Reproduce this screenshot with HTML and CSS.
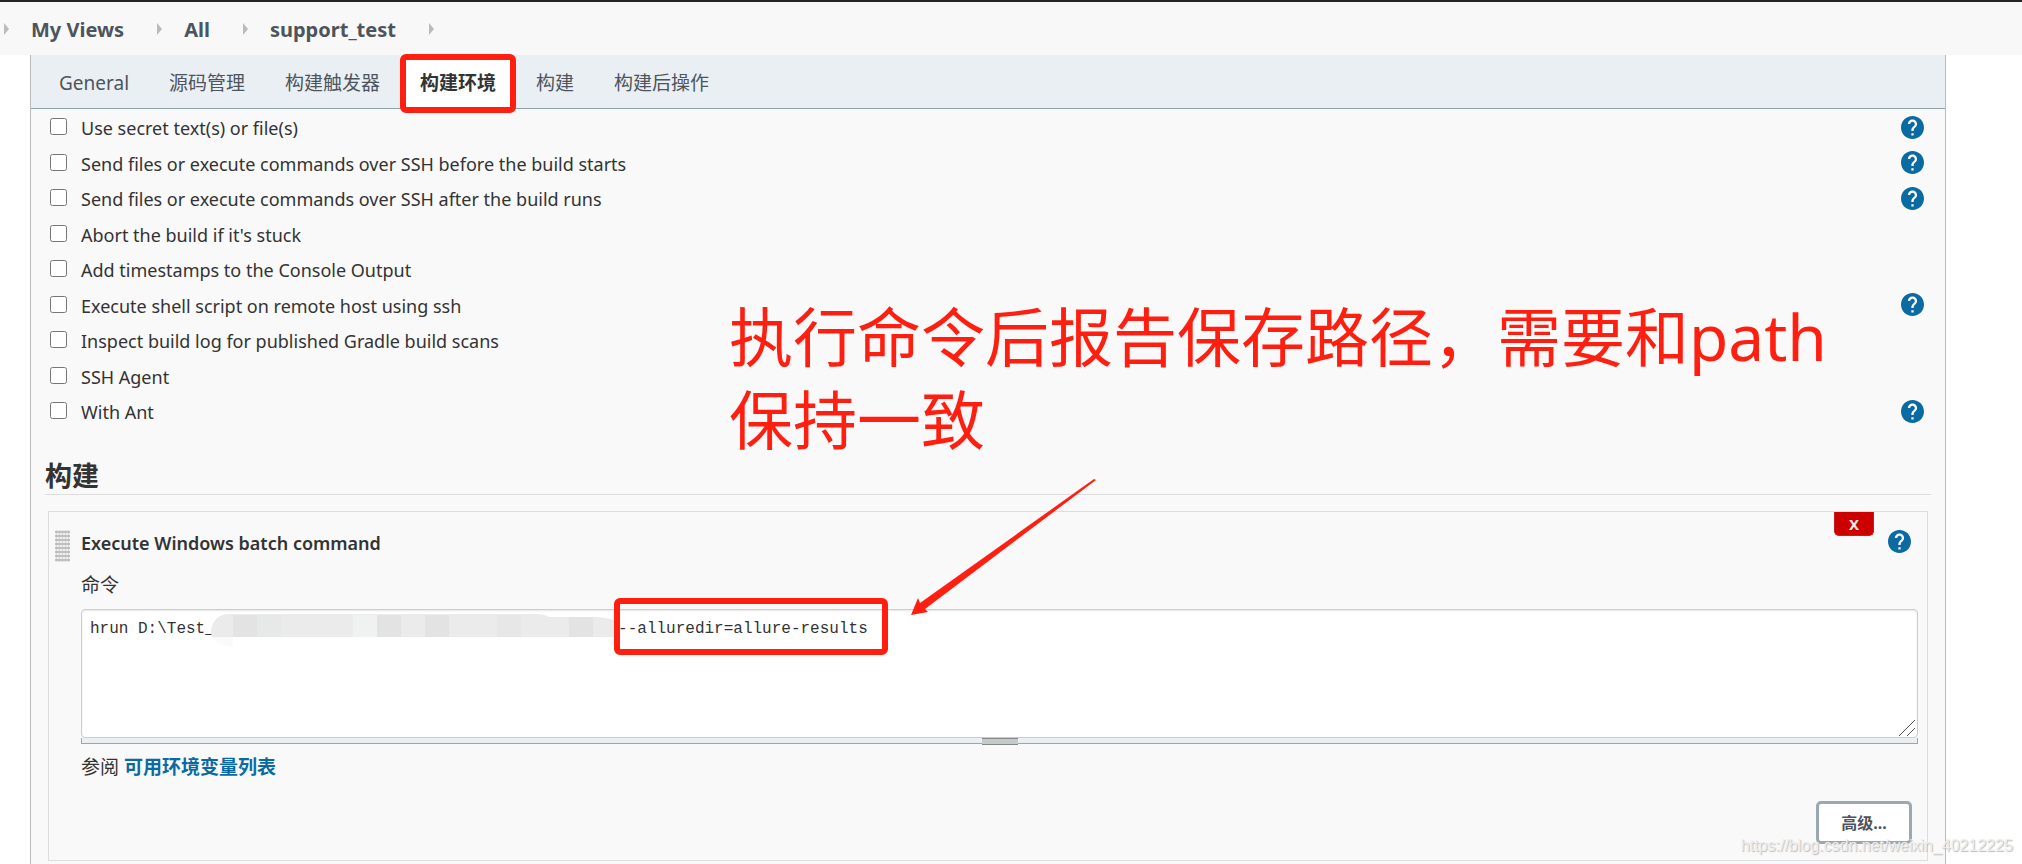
FILE: index.html
```html
<!DOCTYPE html>
<html lang="zh-CN">
<head>
    <meta charset="UTF-8">
    <meta name="viewport" content="width=device-width, initial-scale=1.0">
    <title>support_test Config</title>
    <link rel="stylesheet" href="styles.css">
</head>
<body>
    <svg class="sprite" aria-hidden="true">
        <symbol id="help" viewBox="2 2 20 20">
            <path d="M12 2C6.48 2 2 6.48 2 12s4.48 10 10 10 10-4.48 10-10S17.52 2 12 2zm1 17h-2v-2h2v2zm2.07-7.75l-.9.92C13.45 12.9 13 13.5 13 15h-2v-.5c0-1.1.45-2.1 1.17-2.83l1.24-1.26c.37-.36.59-.86.59-1.41 0-1.1-.9-2-2-2s-2 .9-2 2H8c0-2.21 1.79-4 4-4s4 1.79 4 4c0 .88-.36 1.68-.93 2.25z"/>
        </symbol>
    </svg>

    <nav class="breadcrumbs">
        <span class="sep"></span>
        <a href="#">My Views</a>
        <span class="sep"></span>
        <a href="#">All</a>
        <span class="sep"></span>
        <a href="#">support_test</a>
        <span class="sep"></span>
    </nav>

    <main class="config">
        <div class="tabs">
            <a class="tab" href="#">General</a>
            <a class="tab" href="#">源码管理</a>
            <a class="tab" href="#">构建触发器</a>
            <a class="tab active" href="#">构建环境</a>
            <a class="tab" href="#">构建</a>
            <a class="tab" href="#">构建后操作</a>
        </div>

        <div class="options">
            <div class="option">
                <input type="checkbox" id="opt1"><label for="opt1">Use secret text(s) or file(s)</label>
                <a class="help" href="#" aria-label="Help"><svg><use href="#help"/></svg></a>
            </div>
            <div class="option">
                <input type="checkbox" id="opt2"><label for="opt2">Send files or execute commands over SSH before the build starts</label>
                <a class="help" href="#" aria-label="Help"><svg><use href="#help"/></svg></a>
            </div>
            <div class="option">
                <input type="checkbox" id="opt3"><label for="opt3">Send files or execute commands over SSH after the build runs</label>
                <a class="help" href="#" aria-label="Help"><svg><use href="#help"/></svg></a>
            </div>
            <div class="option">
                <input type="checkbox" id="opt4"><label for="opt4">Abort the build if it's stuck</label>
            </div>
            <div class="option">
                <input type="checkbox" id="opt5"><label for="opt5">Add timestamps to the Console Output</label>
            </div>
            <div class="option">
                <input type="checkbox" id="opt6"><label for="opt6">Execute shell script on remote host using ssh</label>
                <a class="help" href="#" aria-label="Help"><svg><use href="#help"/></svg></a>
            </div>
            <div class="option">
                <input type="checkbox" id="opt7"><label for="opt7">Inspect build log for published Gradle build scans</label>
            </div>
            <div class="option">
                <input type="checkbox" id="opt8"><label for="opt8">SSH Agent</label>
            </div>
            <div class="option">
                <input type="checkbox" id="opt9"><label for="opt9">With Ant</label>
                <a class="help" href="#" aria-label="Help"><svg><use href="#help"/></svg></a>
            </div>
        </div>

        <h2 class="section-title">构建</h2>

        <section class="step">
            <button class="delete-btn" type="button">X</button>
            <div class="step-head">
                <span class="drag-handle"></span>
                <b>Execute Windows batch command</b>
                <a class="help" href="#" aria-label="Help"><svg><use href="#help"/></svg></a>
            </div>
            <div class="step-body">
                <label for="command">命令</label>
                <div class="command-box">
                    <textarea id="command" spellcheck="false">hrun D:\Test_                                          --alluredir=allure-results</textarea>
                    <svg class="mosaic" viewBox="0 0 408 34" aria-hidden="true">
                        <path d="M0 19C0 7 8 0 18 0H324q10 0 14 3H385q18 1 23 6V23H1z" fill="#ebebeb"/>
                        <path d="M1 23H22V33Q4 30 1 23z" fill="#fafafa"/>
                        <path d="M22 1h24v22H22zM166 1h24v22H166zM214 1h24v22H214zM358 3h24v20H358z" fill="#e3e3e3"/>
                        <path d="M46 1h24v22H46z" fill="#e6e9e8"/>
                        <path d="M142 1h24v22H142z" fill="#f0f2f1"/>
                        <path d="M286 1h24v22H286z" fill="#e7e7e7"/>
                    </svg>
                    <svg class="grip" viewBox="0 0 16 16" aria-hidden="true">
                        <path d="M0 16L16 0M8 16L16 8" fill="none" stroke="#555"/>
                    </svg>
                    <span class="mark-box"></span>
                    <div class="resize-bar"></div>
                </div>
                <p class="reference">参阅 <a href="#">可用环境变量列表</a></p>
                <div class="step-actions">
                    <button class="advanced-btn" type="button">高级...</button>
                </div>
            </div>
        </section>

        <p class="note">执行命令后报告保存路径，需要和path<br>保持一致</p>
        <svg class="note-arrow" viewBox="0 0 188 138" aria-hidden="true">
            <path d="M1 137L8 120L10 125L184 1L186 2L15 131L18 134z" fill="#ff1f10"/>
        </svg>
    </main>

    <div class="watermark">https://blog.csdn.net/weixin_40212225</div>
</body>
</html>
```

FILE: styles.css
```css
* {
    box-sizing: border-box;
}
body {
    margin: 0;
    background-color: #fff;
    color: #333;
    font-family: "Noto Sans", "Noto Sans CJK SC", sans-serif;
    font-size: 18px;
    line-height: 26px;
}
a {
    text-decoration: none;
}
.sprite {
    display: none;
}
.breadcrumbs {
    display: flex;
    align-items: center;
    height: 55px;
    padding-left: 4px;
    border-top: 2px solid #252324;
    background-color: #f8f8f8;
    font-size: 20px;
    font-weight: bold;
}
.breadcrumbs a {
    margin: 2px 33px 0 22px;
    color: #4d545d;
}
.sep {
    border-left: 5px solid #bbb;
    border-top: 6px solid transparent;
    border-bottom: 6px solid transparent;
}
.config {
    position: relative;
    min-height: calc(100vh - 55px);
    margin: 0 76px 0 30px;
    border-left: 1px solid #bbb;
    border-right: 1px solid #bbb;
    background-color: #f9f9f9;
}
.tabs {
    display: flex;
    height: 54px;
    padding-left: 8px;
    border-bottom: 1px solid #8fa2ad;
    background-color: #e9eff2;
}
.tab {
    display: flex;
    align-items: center;
    padding: 2px 20px 0;
    color: #4d545d;
    font-size: 19px;
}
.tab.active {
    position: relative;
    background-color: #fff;
    color: #333;
    font-weight: bold;
}
/* red marker around the selected tab */
.tab.active::after {
    content: "";
    position: absolute;
    inset: -1px 0 -5px;
    border: 6px solid #ff1f10;
    border-radius: 6px;
}
.options {
    padding: 1px 21px 0 19px;
}
.option {
    display: flex;
    align-items: center;
    height: 36px;
}
.option:nth-child(even) {
    height: 35px;
}
.option input {
    width: 17px;
    height: 17px;
    margin: 0 14px 3px 0;
}
.help {
    display: block;
    height: 23px;
    margin: 0 0 2px auto;
}
.help svg {
    display: block;
    width: 23px;
    height: 23px;
    fill: #0b6aa2;
}
.section-title {
    margin: 28px 14px 16px;
    border-bottom: 1px solid #ddd;
    font-size: 27px;
    line-height: 36px;
}
.step {
    position: relative;
    margin: 0 17px;
    padding: 18px 9px 16px 6px;
    border: 1px solid #ddd;
}
.delete-btn {
    position: absolute;
    top: 0;
    right: 53px;
    width: 40px;
    height: 24px;
    padding: 0;
    border: 1px solid #b22;
    border-top: none;
    border-radius: 0 0 5px 5px;
    background-color: #c00;
    color: #eee;
    font-family: "Noto Sans", sans-serif;
    font-size: 15px;
    font-weight: bold;
}
.step-head {
    display: flex;
    align-items: flex-start;
    height: 32px;
    padding-right: 7px;
}
.step-head b {
    margin-left: 11px;
    font-weight: 600;
}
.drag-handle {
    width: 15px;
    height: 32px;
    background-image: radial-gradient(circle, #bbb 1px, transparent 2px);
    background-size: 3px 4px;
}
.step-body {
    padding-left: 26px;
}
.step-body label {
    display: block;
    margin: 10px 0 11px;
    font-size: 19px;
}
.command-box {
    position: relative;
}
textarea {
    display: block;
    width: 100%;
    height: 129px;
    padding: 8px;
    border: 1px solid #ccc;
    border-radius: 4px;
    background-color: #fff;
    box-shadow: inset 0 1px 2px rgba(0, 0, 0, 0.1);
    color: #333;
    font-family: "Liberation Mono", monospace;
    font-size: 16px;
    line-height: 22px;
    resize: none;
}
.mosaic {
    position: absolute;
    top: 5px;
    left: 130px;
    width: 408px;
    height: 34px;
}
.grip {
    position: absolute;
    right: 3px;
    bottom: 8px;
    width: 16px;
    height: 16px;
}
.mark-box {
    position: absolute;
    top: -11px;
    left: 533px;
    width: 274px;
    height: 57px;
    border: 6px solid #ff1f10;
    border-radius: 6px;
}
.resize-bar {
    height: 6px;
    border: 1px solid #9aa5ae;
    border-top: none;
    background-color: #e9eff2;
}
.resize-bar::before {
    content: "";
    display: block;
    width: 36px;
    height: 5px;
    margin: 0 auto;
    border-top: 1px solid #888;
    border-bottom: 1px solid #888;
    background-color: #c4c9c9;
}
.reference {
    margin: 10px 0 21px;
    font-size: 19px;
}
.reference a {
    color: #0b6aa2;
    font-weight: bold;
}
.step-actions {
    display: flex;
    justify-content: flex-end;
    padding-right: 6px;
}
.advanced-btn {
    width: 96px;
    height: 43px;
    padding: 0 0 2px;
    border: 3px solid #9aa8b0;
    border-radius: 5px;
    background-color: #fff;
    color: #4d545d;
    font-family: "Noto Sans", "Noto Sans CJK SC", sans-serif;
    font-size: 16px;
    font-weight: bold;
}
.note {
    position: absolute;
    top: 240px;
    left: 698px;
    margin: 0;
    color: #ff1f10;
    font-size: 64px;
    line-height: 83px;
    white-space: nowrap;
}
.note-arrow {
    position: absolute;
    top: 423px;
    left: 879px;
    width: 188px;
    height: 138px;
}
.watermark {
    position: absolute;
    right: 9px;
    bottom: 7px;
    color: #eee;
    font-family: "Liberation Sans", Arial, sans-serif;
    font-size: 16px;
    line-height: 22px;
    text-shadow: 1px 1px 1px #bbb;
}
```
